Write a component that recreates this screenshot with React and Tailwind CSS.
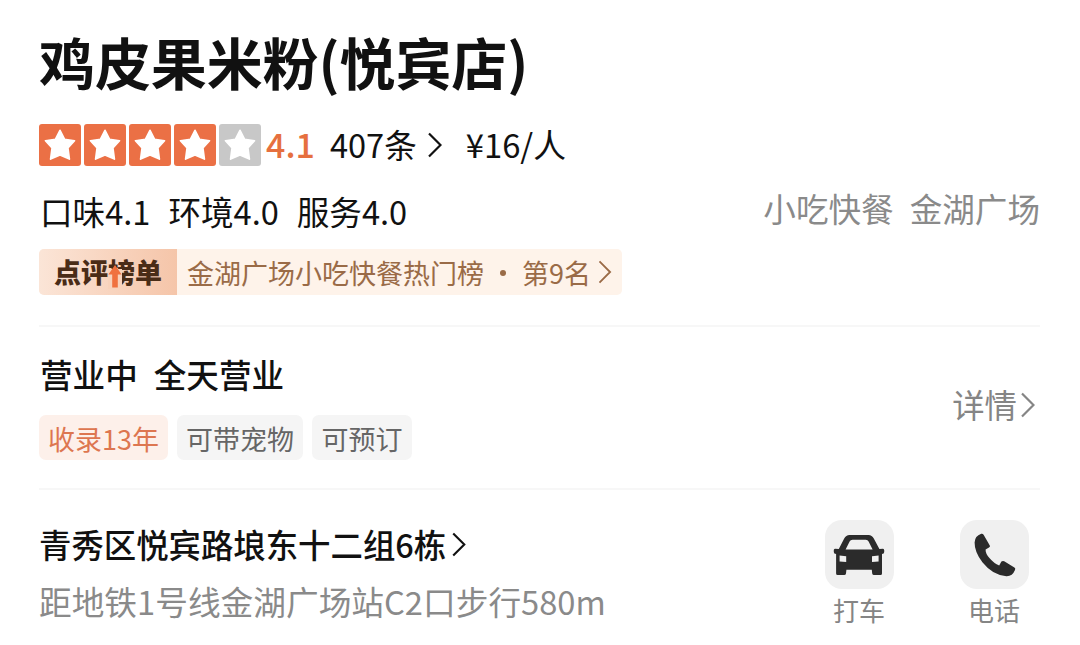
import React from 'react';

const scores = [
  { label: '口味', value: '4.1' },
  { label: '环境', value: '4.0' },
  { label: '服务', value: '4.0' },
];

const Chevron = ({ className, strokeWidth = 2.4 }) => (
  <svg viewBox="0 0 14 26" className={className} fill="none" stroke="currentColor" strokeWidth={strokeWidth}>
    <path d="M1 1.5 L12.5 13 L1 24.5" />
  </svg>
);

const Star = ({ active }) => (
  <div className={`flex h-[42px] w-[42px] items-center justify-center rounded-[3px] ${active ? 'bg-[#eb7045]' : 'bg-[#c8c8c8]'}`}>
    <svg viewBox="0 0 30 30" className="h-[32px] w-[32px]" fill="white" stroke="white" strokeWidth="1.6" strokeLinejoin="round">
      <path d="M15 1.2 L19.2 9.6 L28.6 11 L22.4 17.8 L23.8 28.2 L15 24.4 L6.2 28.2 L7.6 17.8 L1.4 11 L10.8 9.6 Z" />
    </svg>
  </div>
);

const CarIcon = () => (
  <svg viewBox="0 0 52 42" className="h-[42px] w-[52px]" fill="#2b2b2b">
    <path
      fillRule="evenodd"
      d="M16.5 1 H35.5 Q39 1 40.8 4.5 L46.4 15 L50 14.8 Q51.2 15 51.2 16 V18 Q51.2 19.8 49 20 V39.5 Q49 41 47.5 41 H41 Q39.5 41 39.2 39.5 L38.8 35.8 H13.4 L13 39.5 Q12.7 41 11.2 41 H4.6 Q3.1 41 3.1 39.5 V20 Q.8 19.8 .8 18 V16 Q.8 15 2 14.8 L5.8 15 L11.2 4.5 Q13 1 16.5 1 Z M19.5 5.8 Q17.4 5.8 16.6 7.4 L12.6 15.6 H39.6 L35.6 7.4 Q34.8 5.8 32.7 5.8 Z M6.6 21.4 V27.4 L13.2 27.9 V22.2 Z M45.6 21.4 V27.4 L39 27.9 V22.2 Z"
    />
  </svg>
);

const PhoneIcon = () => (
  <svg viewBox="0 0 42 44" className="ml-[2px] h-[44px] w-[42px]" fill="#2b2b2b">
    <path d="M7.2 .8 Q8.6 .2 9.6 1.8 L15.8 12.4 Q16.4 13.8 15 14.6 L11.6 16.4 Q11.4 20.2 15.2 24.8 Q20 30.6 25.2 32.4 L27.4 28.6 Q28.6 27.4 30.2 28.2 L40.4 34.6 Q41.8 35.6 41 37 Q38.4 43.4 32.4 43.2 Q19 42.6 8.6 29.6 Q.4 18.8 .6 9.4 Q.8 3.2 7.2 .8 Z" />
  </svg>
);

const Action = ({ label, children }) => (
  <div className="flex w-[70px] flex-col items-center">
    <div className="flex h-[69px] w-[69px] items-center justify-center rounded-[17px] bg-[#f0f0f0]">{children}</div>
    <span className="mt-[6px] text-[26px] leading-[29px] text-[#858585]">{label}</span>
  </div>
);

const RankBanner = () => (
  <div className="mt-[17px] flex h-[46px] w-[583px] items-center overflow-hidden rounded-[5px] bg-[#fef3ea]">
    <div className="relative flex h-full w-[138px] items-center justify-center bg-linear-to-r from-[#fbe5d7] to-[#f5c5a9] text-[27px] leading-[40px] font-black text-[#4a2c17]">
      <span>点评榜单</span>
      {/* Rising arrow in place of the lower left part of 榜 */}
      <svg viewBox="0 0 14 25" className="absolute top-[15px] left-[69px] h-[25px] w-[14px]">
        <path d="M0 5 H14 V25 H0 Z" fill="#f8d2bb" />
        <path d="M7 1 L13.6 10.5 H9.8 V23.5 H4.2 V10.5 H.4 Z" fill="#f0713f" />
      </svg>
    </div>
    <span className="mt-[2px] ml-[10px] text-[27px] leading-[40px] text-[#9a6b47]">金湖广场小吃快餐热门榜</span>
    <span className="mt-[2px] mr-[16px] ml-[16px] h-[6px] w-[6px] rounded-full bg-[#9a6b47]" />
    <span className="mt-[2px] text-[27px] leading-[40px] text-[#9a6b47]">第9名</span>
    <Chevron className="ml-[7px] h-[24px] w-[14px] text-[#9a6b47]" strokeWidth={2} />
  </div>
);

export default function App() {
  return (
    <div className="h-[645px] w-[1080px] overflow-hidden bg-white px-[39px] pt-[33px] font-['Noto_Sans_CJK_SC',sans-serif] text-[#111111]">
      {/* Title and rating */}
      <h1 className="text-[56px] leading-[56px] font-bold tracking-[-0.1px]">鸡皮果米粉(悦宾店)</h1>
      <div className="mt-[35px] flex h-[42px] items-center">
        <div className="flex gap-[3px]">
          {[1, 2, 3, 4, 5].map((n) => (
            <Star key={n} active={n <= 4} />
          ))}
        </div>
        <span className="mb-[2px] ml-[5px] text-[34px] leading-[42px] font-medium text-[#e6703f]">4.1</span>
        <span className="mb-[2px] ml-[15px] text-[32.6px] leading-[42px]">407条</span>
        <Chevron className="ml-[11px] h-[26px] w-[14px]" strokeWidth={2.2} />
        <span className="mb-[2px] ml-[24px] text-[32.8px] leading-[42px]">¥16/人</span>
      </div>

      {/* Scores and category */}
      <div className="mt-[24px] flex h-[42px] items-center justify-between">
        <div className="flex gap-[18px] pl-[1px] text-[32.6px] leading-[42px]">
          {scores.map((s) => (
            <span key={s.label}>{s.label}{s.value}</span>
          ))}
        </div>
        <div className="mr-[1px] mb-[7px] flex gap-[16px] text-[32.6px] leading-[42px] text-[#8a8a8a]">
          <span>小吃快餐</span>
          <span>金湖广场</span>
        </div>
      </div>

      <RankBanner />

      {/* Opening hours */}
      <div className="mt-[30px] mr-[1px] flex h-[163px] items-center justify-between border-t-2 border-[#f7f7f7]">
        <div className="mb-[3px]">
          <div className="flex gap-[16px] pl-[1px] text-[32.6px] leading-[42px] font-medium">
            <span>营业中</span>
            <span>全天营业</span>
          </div>
          <div className="mt-[20px] flex gap-[9px] text-[27px] leading-[48px] text-[#666666]">
            <span className="h-[45px] w-[129px] rounded-[7px] bg-[#fdf0ea] text-center text-[#dd7650]">收录13年</span>
            <span className="h-[45px] w-[126px] rounded-[7px] bg-[#f5f5f5] text-center">可带宠物</span>
            <span className="h-[45px] w-[100px] rounded-[7px] bg-[#f5f5f5] text-center">可预订</span>
          </div>
        </div>
        <div className="mb-[5px] flex items-center pr-[5px] text-[32.4px] leading-[42px] text-[#858585]">
          <span className="-mt-[2px]">详情</span>
          <Chevron className="ml-[4px] h-[26px] w-[14px]" strokeWidth={2.2} />
        </div>
      </div>

      {/* Address */}
      <div className="mr-[1px] flex justify-between border-t-2 border-[#f7f7f7] pt-[30px]">
        <div className="pt-[1px]">
          <div className="flex items-center text-[32.4px] leading-[46px] font-medium">
            <span>青秀区悦宾路埌东十二组6栋</span>
            <Chevron className="ml-[6px] h-[25px] w-[14px]" strokeWidth={2.2} />
          </div>
          <div className="mt-[12px] text-[32.7px] leading-[44px] text-[#8a8a8a]">距地铁1号线金湖广场站C2口步行580m</div>
        </div>
        <div className="mr-[11px] flex gap-[65px]">
          <Action label="打车">
            <CarIcon />
          </Action>
          <Action label="电话">
            <PhoneIcon />
          </Action>
        </div>
      </div>
    </div>
  );
}
